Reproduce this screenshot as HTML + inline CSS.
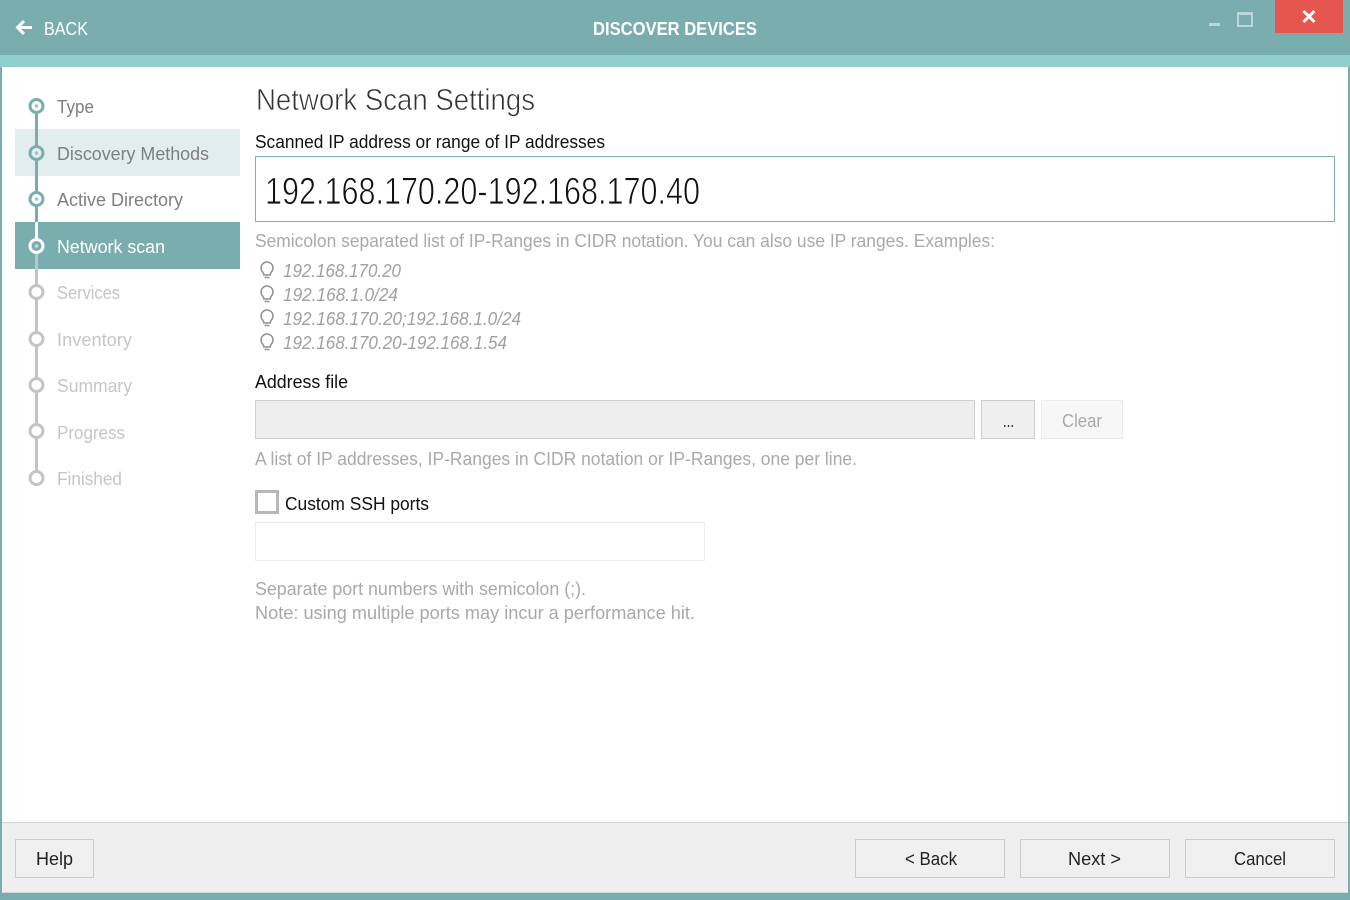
<!DOCTYPE html>
<html><head><meta charset="utf-8"><style>
html,body{margin:0;padding:0;width:1350px;height:900px;overflow:hidden;background:#fff}
svg{display:block;position:absolute;left:0;top:0}
text{font-family:"Liberation Sans",sans-serif;font-size:18px}
.g{fill:#a9a9a9}.s{fill:#7f7f7f}.d{fill:#c6c6c6}.k{fill:#222}
</style></head><body>
<svg width="1350" height="900" viewBox="0 0 1350 900" xmlns="http://www.w3.org/2000/svg">
<rect width="1350" height="900" fill="#7aaeae"/>
<rect x="0" y="55" width="1350" height="12" fill="#90cfcb"/>
<rect x="2" y="67" width="1346" height="826" fill="#fff"/>
<rect x="2" y="822" width="1346" height="71" fill="#efefef"/>
<rect x="2" y="822" width="1346" height="1" fill="#d4d4d4"/>
<rect x="2" y="892" width="1346" height="1" fill="#d0dcdc"/>

<path d="M17 27.500H32M24 21L17.500 27.500L24 34" fill="none" stroke="#fff" stroke-width="3"/>
<text x="44" y="35" textLength="44" lengthAdjust="spacingAndGlyphs" fill="#fff">BACK</text>
<text x="593" y="35" textLength="164" lengthAdjust="spacingAndGlyphs" fill="#fff" font-weight="bold">DISCOVER DEVICES</text>
<rect x="1209" y="23" width="11" height="3" fill="#bcd8d6"/>
<rect x="1238" y="13" width="14" height="13" fill="none" stroke="#bcd8d6" stroke-width="2"/>
<rect x="1238" y="12" width="14" height="3" fill="#bcd8d6"/>
<rect x="1275" y="0" width="68" height="33" fill="#e5564e"/>
<path d="M1303.500 11L1314.500 22M1314.500 11L1303.500 22" stroke="#fff" stroke-width="3" fill="none"/>

<rect x="15" y="129" width="225" height="47" fill="#e2eeee"/>
<rect x="15" y="222" width="225" height="47" fill="#7aaeae"/>
<rect x="35" y="106" width="3" height="116" fill="#7aaeae"/>
<rect x="35" y="222" width="3" height="24" fill="#fff"/>
<rect x="35" y="246" width="3" height="232" fill="#c4c4c4"/>
<g fill="#fff" stroke="#7aaeae" stroke-width="3">
<circle cx="36.500" cy="106" r="6.500"/>
<circle cx="36.500" cy="153" r="6.500" fill="#e2eeee"/>
<circle cx="36.500" cy="199" r="6.500"/>
</g>
<circle cx="36.500" cy="246" r="6.500" fill="#7aaeae" stroke="#fff" stroke-width="3"/>
<g fill="#9cc4c4"><circle cx="36.500" cy="106" r="1.800"/><circle cx="36.500" cy="153" r="1.800"/><circle cx="36.500" cy="199" r="1.800"/></g>
<circle cx="36.500" cy="246" r="1.800" fill="#c4dcdc"/>
<g fill="#fff" stroke="#c4c4c4" stroke-width="3">
<circle cx="36.500" cy="292" r="6.500"/>
<circle cx="36.500" cy="339" r="6.500"/>
<circle cx="36.500" cy="385" r="6.500"/>
<circle cx="36.500" cy="431" r="6.500"/>
<circle cx="36.500" cy="478" r="6.500"/>
</g>
<text class="s" x="57" y="113" textLength="37" lengthAdjust="spacingAndGlyphs">Type</text>
<text class="s" x="57" y="160" textLength="152" lengthAdjust="spacingAndGlyphs">Discovery Methods</text>
<text class="s" x="57" y="206" textLength="126" lengthAdjust="spacingAndGlyphs">Active Directory</text>
<text x="57" y="253" textLength="108" lengthAdjust="spacingAndGlyphs" fill="#fff">Network scan</text>
<text class="d" x="57" y="299" textLength="63" lengthAdjust="spacingAndGlyphs">Services</text>
<text class="d" x="57" y="346" textLength="75" lengthAdjust="spacingAndGlyphs">Inventory</text>
<text class="d" x="57" y="392" textLength="75" lengthAdjust="spacingAndGlyphs">Summary</text>
<text class="d" x="57" y="439" textLength="68" lengthAdjust="spacingAndGlyphs">Progress</text>
<text class="d" x="57" y="485" textLength="65" lengthAdjust="spacingAndGlyphs">Finished</text>

<text x="256" y="110" textLength="279" lengthAdjust="spacingAndGlyphs" fill="#333" stroke="#fff" stroke-width=".7" style="font-size:31px">Network Scan Settings</text>
<text x="255" y="148" textLength="350" lengthAdjust="spacingAndGlyphs" fill="#111">Scanned IP address or range of IP addresses</text>
<rect x="255.500" y="156.500" width="1079" height="65" fill="#fff" stroke="#7fb3b1"/>
<text x="265" y="204" textLength="435" lengthAdjust="spacingAndGlyphs" fill="#111" stroke="#fff" stroke-width=".8" style="font-size:38px">192.168.170.20-192.168.170.40</text>
<text class="g" x="255" y="247" textLength="740" lengthAdjust="spacingAndGlyphs">Semicolon separated list of IP-Ranges in CIDR notation. You can also use IP ranges. Examples:</text>

<defs><g id="b" fill="none" stroke="#909090" stroke-width="1.500"><path d="M4 13C4 10.500 1 9.500 1 6A6 6 0 0 1 13 6C13 9.500 10 10.500 10 13Z"/><path d="M4.500 15.500H9.500"/></g></defs>
<use href="#b" x="260" y="262"/><use href="#b" x="260" y="286"/><use href="#b" x="260" y="310"/><use href="#b" x="260" y="334"/>
<g fill="#a0a0a0" font-style="italic">
<text x="283" y="277" textLength="118" lengthAdjust="spacingAndGlyphs">192.168.170.20</text>
<text x="283" y="301" textLength="115" lengthAdjust="spacingAndGlyphs">192.168.1.0/24</text>
<text x="283" y="325" textLength="238" lengthAdjust="spacingAndGlyphs">192.168.170.20;192.168.1.0/24</text>
<text x="283" y="349" textLength="224" lengthAdjust="spacingAndGlyphs">192.168.170.20-192.168.1.54</text>
</g>
<text x="255" y="388" textLength="93" lengthAdjust="spacingAndGlyphs" fill="#111">Address file</text>
<rect x="255.500" y="400.500" width="719" height="38" fill="#eee" stroke="#d0d0d0"/>
<rect x="981.500" y="400.500" width="53" height="38" fill="#efefef" stroke="#cdcdcd"/>
<text x="1003" y="427" textLength="11" lengthAdjust="spacingAndGlyphs" fill="#222">...</text>
<rect x="1041.500" y="400.500" width="81" height="38" fill="#f7f7f7" stroke="#ececec"/>
<text x="1062" y="427" textLength="40" lengthAdjust="spacingAndGlyphs" fill="#a9a9a9">Clear</text>
<text class="g" x="255" y="465" textLength="602" lengthAdjust="spacingAndGlyphs">A list of IP addresses, IP-Ranges in CIDR notation or IP-Ranges, one per line.</text>
<rect x="256.500" y="491.500" width="21" height="21" fill="#fff" stroke="#b8b8b8" stroke-width="3"/>
<text x="285" y="510" textLength="144" lengthAdjust="spacingAndGlyphs" fill="#111">Custom SSH ports</text>
<rect x="255.500" y="522.500" width="449" height="38" fill="#fff" stroke="#ececec"/>
<text class="g" x="255" y="595" textLength="331" lengthAdjust="spacingAndGlyphs">Separate port numbers with semicolon (;).</text>
<text class="g" x="255" y="619" textLength="440" lengthAdjust="spacingAndGlyphs">Note: using multiple ports may incur a performance hit.</text>

<g fill="#f0f0f0" stroke="#cccccc">
<rect x="15.500" y="839.500" width="78" height="38"/>
<rect x="855.500" y="839.500" width="149" height="38"/>
<rect x="1020.500" y="839.500" width="149" height="38"/>
<rect x="1185.500" y="839.500" width="149" height="38"/>
</g>
<text class="k" x="36" y="865" textLength="37" lengthAdjust="spacingAndGlyphs">Help</text>
<text class="k" x="905" y="865" textLength="52" lengthAdjust="spacingAndGlyphs">&lt; Back</text>
<text class="k" x="1068" y="865" textLength="53" lengthAdjust="spacingAndGlyphs">Next &gt;</text>
<text class="k" x="1234" y="865" textLength="52" lengthAdjust="spacingAndGlyphs">Cancel</text>
</svg>
</body></html>
